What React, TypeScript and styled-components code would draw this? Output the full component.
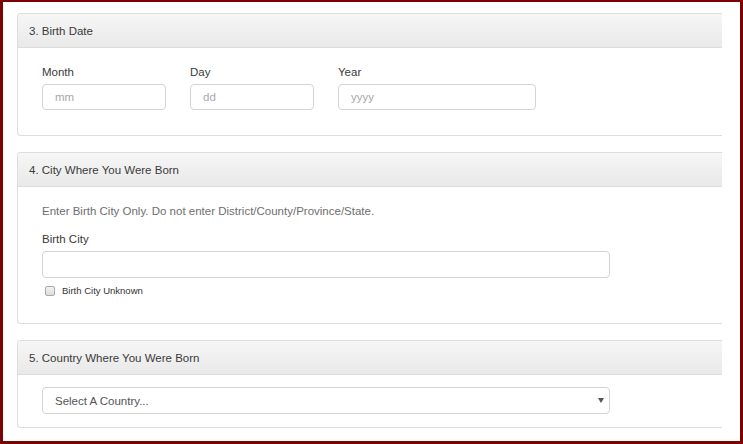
import styled, { createGlobalStyle } from "styled-components";

const GlobalStyle = createGlobalStyle`
  html, body {
    margin: 0;
    padding: 0;
    background: #ffffff;
  }
  * {
    box-sizing: border-box;
  }
`;

const Frame = styled.div`
  width: 743px;
  height: 444px;
  border: 3px solid #7b0303;
  border-top-width: 2px;
  padding: 11px 18px 0 14px;
  background: #ffffff;
  overflow: hidden;
  font-family: "Liberation Sans", Arial, sans-serif;
  color: #333333;
`;

const Panel = styled.section`
  border: 1px solid #dddddd;
  border-right: none;
  border-radius: 4px 0 0 4px;
  margin-bottom: 16px;
  overflow: hidden;
  background: #ffffff;
`;

const PanelHeading = styled.div`
  height: 34px;
  padding: 0 11px;
  display: flex;
  align-items: center;
  font-size: 11.5px;
  color: #3a3a3a;
  background: linear-gradient(to bottom, #f6f6f6, #e9e9e9);
  border-bottom: 1px solid #dddddd;
`;

const PanelBody = styled.div<{ $top: number; $bottom: number }>`
  padding: ${(p) => p.$top}px 24px ${(p) => p.$bottom}px 24px;
  width: 900px;
`;

const Row = styled.div`
  display: flex;
  gap: 24px;
`;

const Field = styled.div<{ $width: number }>`
  width: ${(p) => p.$width}px;
  display: flex;
  flex-direction: column;
`;

const Label = styled.label`
  font-size: 11.5px;
  line-height: 14px;
  color: #3a3a3a;
  margin-bottom: 5px;
`;

const Input = styled.input<{ $h?: number }>`
  height: ${(p) => p.$h ?? 26}px;
  width: 100%;
  border: 1px solid #d4d4d4;
  border-radius: 4px;
  padding: 0 12px;
  font-family: "Liberation Sans", Arial, sans-serif;
  font-size: 11.5px;
  color: #555555;
  background: #ffffff;
  outline: none;
  &::placeholder {
    color: #a8a8a8;
  }
`;

const Hint = styled.p`
  margin: 0 0 14px;
  font-size: 11.5px;
  line-height: 14px;
  color: #6e6e6e;
`;

const CheckRow = styled.label`
  display: flex;
  align-items: center;
  gap: 7px;
  margin-top: 7px;
  padding-left: 3px;
  font-size: 9.5px;
  line-height: 12px;
  color: #333333;
`;

const Check = styled.input`
  appearance: none;
  margin: 0;
  width: 10px;
  height: 10px;
  border: 1px solid #a9a9a9;
  border-radius: 2px;
  background: linear-gradient(to bottom, #f2f2f2, #dcdcdc);
`;

const SelectWrap = styled.div`
  position: relative;
  width: 568px;
`;

const Select = styled.select`
  appearance: none;
  width: 100%;
  height: 27px;
  border: 1px solid #d4d4d4;
  border-radius: 4px;
  padding: 0 12px;
  font-family: "Liberation Sans", Arial, sans-serif;
  font-size: 11.5px;
  color: #555555;
  background: #ffffff;
  outline: none;
`;

const Caret = styled.span`
  position: absolute;
  right: 6px;
  top: 11px;
  width: 0;
  height: 0;
  border-left: 3px solid transparent;
  border-right: 3px solid transparent;
  border-top: 5px solid #555555;
  pointer-events: none;
`;

export default function App() {
  return (
    <>
      <GlobalStyle />
      <Frame>
        <Panel>
          <PanelHeading>3. Birth Date</PanelHeading>
          <PanelBody $top={17} $bottom={25}>
            <Row>
              <Field $width={124}>
                <Label>Month</Label>
                <Input placeholder="mm" />
              </Field>
              <Field $width={124}>
                <Label>Day</Label>
                <Input placeholder="dd" />
              </Field>
              <Field $width={198}>
                <Label>Year</Label>
                <Input placeholder="yyyy" />
              </Field>
            </Row>
          </PanelBody>
        </Panel>

        <Panel>
          <PanelHeading>4. City Where You Were Born</PanelHeading>
          <PanelBody $top={17} $bottom={26}>
            <Hint>Enter Birth City Only. Do not enter District/County/Province/State.</Hint>
            <Field $width={568}>
              <Label>Birth City</Label>
              <Input $h={27} />
            </Field>
            <CheckRow>
              <Check type="checkbox" />
              Birth City Unknown
            </CheckRow>
          </PanelBody>
        </Panel>

        <Panel>
          <PanelHeading>5. Country Where You Were Born</PanelHeading>
          <PanelBody $top={12} $bottom={13}>
            <SelectWrap>
              <Select defaultValue="">
                <option value="">Select A Country...</option>
              </Select>
              <Caret />
            </SelectWrap>
          </PanelBody>
        </Panel>
      </Frame>
    </>
  );
}
